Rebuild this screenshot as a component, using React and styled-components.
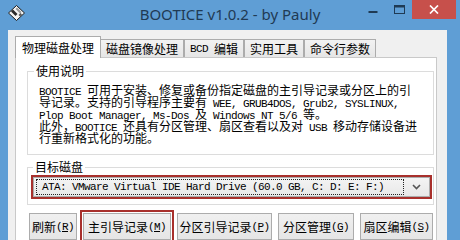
import React from "react";
import styled, { createGlobalStyle } from "styled-components";

const CJK = `"Noto Sans CJK SC", "Liberation Sans", sans-serif`;
const MONO = `"Liberation Mono", "Noto Sans CJK SC", monospace`;

const GlobalStyle = createGlobalStyle`
  html, body {
    margin: 0;
    padding: 0;
    width: 460px;
    height: 240px;
    overflow: hidden;
  }
  body {
    font-family: ${CJK};
    font-size: 12px;
    color: #000;
  }
`;

const Window = styled.div`
  width: 460px;
  height: 240px;
  background: #5f9ed5;
  display: flex;
  flex-direction: column;
  overflow: hidden;
`;

const TitleBar = styled.div`
  height: 30px;
  flex: none;
  display: grid;
  grid-template-columns: 1fr auto 1fr;
  align-items: start;
`;

const AppIcon = styled.div`
  margin: 5px 0 0 8px;
  width: 17px;
  height: 16px;
  display: flex;
`;

const Title = styled.div`
  font-family: "Noto Sans", "Open Sans", sans-serif;
  font-size: 15px;
  line-height: 29px;
  color: #1f3a54;
  white-space: nowrap;
`;

const Controls = styled.div`
  justify-self: end;
  display: flex;
  margin-right: 4px;
`;

const CtrlButton = styled.div`
  width: ${(p) => p.$w}px;
  height: 19px;
  display: flex;
  align-items: center;
  justify-content: center;
  background: ${(p) => (p.$close ? "#c7504b" : "transparent")};
`;

const Body = styled.div`
  flex: 1;
  margin: 0 13px 0 8px;
  background: #f0f0f0;
  padding: 6px 10px 0 7px;
  display: flex;
  flex-direction: column;
  min-height: 0;
`;

const TabStrip = styled.div`
  display: flex;
  align-items: flex-end;
  height: 21px;
  flex: none;
`;

const Tab = styled.div`
  height: ${(p) => (p.$active ? 21 : 17)}px;
  padding: 0 ${(p) => (p.$active ? 6 : 5)}px;
  margin-bottom: ${(p) => (p.$active ? -1 : 0)}px;
  margin-right: ${(p) => (p.$active ? -1 : 0)}px;
  border: 1px solid #acacac;
  border-bottom: none;
  background: ${(p) =>
    p.$active ? "#ffffff" : "linear-gradient(#f2f2f2, #e6e6e6)"};
  position: relative;
  z-index: ${(p) => (p.$active ? 1 : 0)};
  display: flex;
  align-items: center;
  white-space: pre;
  font-size: 12px;
  line-height: 14px;
`;

const Panel = styled.div`
  flex: 1;
  background: #ffffff;
  border: 1px solid #c9c9c9;
  padding: 6px 2px 0 11px;
  display: flex;
  flex-direction: column;
`;

const Group = styled.fieldset`
  margin: ${(p) => p.$top}px 0 0 0;
  min-width: 0;
  border: 1px solid #dcdcdc;
  padding: ${(p) => p.$pad};
`;

const Caption = styled.legend`
  padding: 0 2px;
  margin-left: ${(p) => p.$offset}px;
  font-size: 12px;
  line-height: 14px;
`;

const Line = styled.div`
  font-size: 12px;
  line-height: 12px;
  height: 12px;
  white-space: pre;
`;

const Half = styled.span`
  font-family: ${MONO};
  font-size: 11px;
  letter-spacing: -0.6px;
`;

const Combo = styled.div`
  height: 20px;
  box-sizing: border-box;
  border: 1px solid #acacac;
  outline: 2px solid #a8302c;
  background: linear-gradient(#f4f4f4, #e8e8e8);
  display: flex;
  align-items: center;
  padding-left: 2px;
`;

const ComboText = styled.div`
  flex: 1;
  height: 14px;
  border: 1px dotted #222;
  padding-left: 5px;
  display: flex;
  align-items: center;
  white-space: pre;
`;

const ComboArrow = styled.div`
  width: 25px;
  display: flex;
  align-items: center;
  justify-content: center;
`;

const ButtonRow = styled.div`
  display: flex;
  gap: 6px;
  margin-top: 8px;
  padding-left: 2px;
`;

const Button = styled.div`
  width: ${(p) => p.$w}px;
  height: 27px;
  box-sizing: border-box;
  flex: none;
  border: 1px solid #acacac;
  background: linear-gradient(#f0f0f0, #e5e5e5);
  display: flex;
  align-items: center;
  justify-content: center;
  white-space: pre;
  outline: ${(p) => (p.$marked ? "2px solid #a8302c" : "none")};
  outline-offset: 1px;
`;

function Mixed({ text }) {
  return text
    .split(/([\x20-\x7e]+)/)
    .filter(Boolean)
    .map((part, i) =>
      /^[\x20-\x7e]+$/.test(part) ? <Half key={i}>{part}</Half> : part
    );
}

const usage = [
  "BOOTICE 可用于安装、修复或备份指定磁盘的主引导记录或分区上的引",
  "导记录。支持的引导程序主要有 WEE, GRUB4DOS, Grub2, SYSLINUX,",
  "Plop Boot Manager, Ms-Dos 及 Windows NT 5/6 等。",
  "此外，BOOTICE 还具有分区管理、扇区查看以及对 USB 移动存储设备进",
  "行重新格式化的功能。",
];

const tabs = ["物理磁盘处理", "磁盘镜像处理", "BCD 编辑", "实用工具", "命令行参数"];

const buttons = [
  { label: "刷新", key: "R", w: 48 },
  { label: "主引导记录", key: "M", w: 88, marked: true },
  { label: "分区引导记录", key: "P", w: 95 },
  { label: "分区管理", key: "G", w: 76 },
  { label: "扇区编辑", key: "S", w: 73 },
];

export default function App() {
  return (
    <>
      <GlobalStyle />
      <Window>
        <TitleBar>
          <AppIcon>
            <svg width="17" height="16" viewBox="0 0 17 16">
              <polygon points="8.5,0.5 16.5,8 8.5,15.5 0.5,8" fill="#f4f4f4" stroke="#1a1a1a" strokeWidth="1" />
              <polygon points="5,4.5 9.5,9 7.5,11 3,6.5" fill="#2a2a2a" />
              <polygon points="9,2.5 13.5,7 12,8.5 7.5,4" fill="#9a9a9a" />
              <polygon points="10.5,10 12.5,8 14,9.5 12,11.5" fill="#555" />
            </svg>
          </AppIcon>
          <Title>BOOTICE v1.0.2 - by Pauly</Title>
          <Controls>
            <CtrlButton $w={26}>
              <svg width="10" height="10" viewBox="0 0 10 10">
                <rect x="0.5" y="6" width="9" height="2" fill="#1f3a54" />
              </svg>
            </CtrlButton>
            <CtrlButton $w={26}>
              <svg width="11" height="10" viewBox="0 0 11 10">
                <rect x="0.5" y="0.5" width="10" height="8" fill="none" stroke="#1f3a54" strokeWidth="1" />
                <rect x="0.5" y="0.5" width="10" height="2" fill="#1f3a54" />
              </svg>
            </CtrlButton>
            <CtrlButton $w={44} $close>
              <svg width="10" height="9" viewBox="0 0 10 9">
                <path d="M1 0.5 L9 8.5 M9 0.5 L1 8.5" stroke="#fff" strokeWidth="1.7" />
              </svg>
            </CtrlButton>
          </Controls>
        </TitleBar>
        <Body>
          <TabStrip>
            {tabs.map((t, i) => (
              <Tab key={t} $active={i === 0}>
                <Mixed text={t} />
              </Tab>
            ))}
          </TabStrip>
          <Panel>
            <Group $top={0} $pad="6px 10px 10px 11px">
              <Caption $offset={-5}>使用说明</Caption>
              {usage.map((l) => (
                <Line key={l}>
                  <Mixed text={l} />
                </Line>
              ))}
            </Group>
            <Group $top={5} $pad="3px 3px 7px 5px">
              <Caption $offset={0}>目标磁盘</Caption>
              <Combo>
                <ComboText>
                  <Half>ATA: VMware Virtual IDE Hard Drive (60.0 GB, C: D: E: F:)</Half>
                </ComboText>
                <ComboArrow>
                  <svg width="9" height="6" viewBox="0 0 9 6">
                    <path d="M1 1 L4.5 4.5 L8 1" fill="none" stroke="#555" strokeWidth="1.6" />
                  </svg>
                </ComboArrow>
              </Combo>
            </Group>
            <ButtonRow>
              {buttons.map((b) => (
                <Button key={b.key} $w={b.w} $marked={b.marked}>
                  {b.label}
                  <Half>
                    (<u>{b.key}</u>)
                  </Half>
                </Button>
              ))}
            </ButtonRow>
          </Panel>
        </Body>
      </Window>
    </>
  );
}
